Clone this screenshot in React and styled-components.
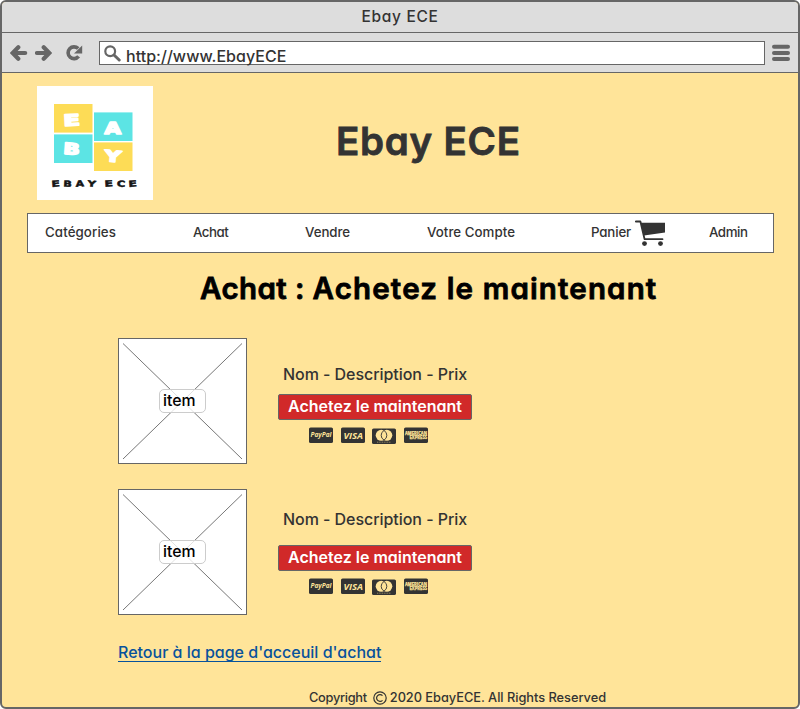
import React from 'react';
import styled, { createGlobalStyle } from 'styled-components';

const INK = '#333333';
const LINE = '#666666';

const GlobalStyle = createGlobalStyle`
  * { box-sizing: border-box; }
  body {
    margin: 0;
    background: #ffffff;
    color: ${INK};
    font-family: Inter, "Noto Sans", sans-serif;
    font-feature-settings: "cv11";
    font-weight: 500;
  }
`;

const Window = styled.div`
  display: flex;
  flex-direction: column;
  width: 800px;
  height: 709px;
  border: 2px solid ${LINE};
  border-radius: 6px;
  background: #ffe499;
  overflow: hidden;

  > * { flex: none; }
`;

const TitleBar = styled.div`
  height: 31px;
  border-bottom: 1px solid ${LINE};
  background: #dddddd;
  text-align: center;
  font-size: 15.5px;
  line-height: 29px;
  letter-spacing: 0.65px;
`;

const Toolbar = styled.div`
  display: flex;
  align-items: center;
  height: 40px;
  padding: 1px 7px 0 8px;
  border-bottom: 1px solid ${LINE};
  background: #dddddd;
`;

const ToolIcon = styled.svg`
  flex: none;
  width: ${({ $w }) => $w}px;
  height: 18px;
  margin-right: ${({ $gap = 0 }) => $gap}px;
  fill: none;
  stroke: ${LINE};
  stroke-width: 4;
`;

const AddressBar = styled.div`
  display: flex;
  width: 666px;
  height: 24px;
  margin-right: 7px;
  padding-left: 4px;
  border: 1px solid ${LINE};
  background: #ffffff;
`;

const SearchIcon = styled.svg`
  width: 17px;
  height: 17px;
  margin: 3px 5px 0 0;
  fill: none;
  stroke: ${LINE};
`;

const Address = styled.span`
  font-size: 16px;
  line-height: 29px;
  letter-spacing: 0.03px;
`;

const Header = styled.header`
  display: flex;
  align-items: center;
  padding: 13px 0 0 35px;
`;

const Logo = styled.svg`
  display: block;
  width: 116px;
  height: 114px;
  background: #ffffff;
  font-family: "DejaVu Sans", sans-serif;
  font-weight: 700;
`;

const SiteName = styled.h1`
  margin: 0 0 4px 183px;
  font-size: 38.5px;
  font-weight: 600;
  line-height: 48px;
  letter-spacing: 0.75px;
  -webkit-text-stroke: 0.8px ${INK};
`;

const Nav = styled.nav`
  display: grid;
  grid-template-columns: 148px 112px 122px 164px 118px auto;
  width: 747px;
  height: 40px;
  margin: 13px 0 0 25px;
  padding-left: 17px;
  border: 1px solid ${LINE};
  background: #ffffff;
`;

const NavItem = styled.span`
  display: flex;
  font-size: 13.3px;
  line-height: 37px;
  letter-spacing: ${({ $track }) => $track}px;
`;

const CartIcon = styled.svg`
  width: 31px;
  height: 27px;
  margin: 6px 0 0 4px;
  fill: ${INK};
  stroke: ${INK};
`;

const PageTitle = styled.h2`
  margin: 17px 0 0 198px;
  color: #000000;
  font-size: 29.5px;
  font-weight: 600;
  line-height: 36px;
  letter-spacing: 1.15px;
  -webkit-text-stroke: 0.8px #000000;
`;

const Prefix = styled.span`
  letter-spacing: 0.4px;
`;

const Items = styled.main`
  display: flex;
  flex-direction: column;
  gap: 25px;
  margin: 32px 0 0 116px;
`;

const ItemRow = styled.article`
  display: flex;
  gap: 31px;
  height: 126px;
`;

const Thumb = styled.div`
  display: grid;
  place-items: center;
  width: 129px;
  border: 1px solid ${LINE};
  background: #ffffff;
`;

const Cross = styled.svg`
  grid-area: 1 / 1;
  width: 127px;
  height: 124px;
  stroke: #777777;
`;

const ThumbLabel = styled.span`
  grid-area: 1 / 1;
  width: 47px;
  height: 24px;
  padding-left: 3px;
  border: 1px solid #cccccc;
  border-radius: 5px;
  background: rgba(255, 255, 255, 0.78);
  color: #000000;
  font-size: 15.8px;
  line-height: 22px;
`;

const Details = styled.div`
  display: flex;
  flex-direction: column;
  align-items: flex-start;
  justify-content: flex-end;
  padding-bottom: 20px;
`;

const Description = styled.p`
  margin: 0 0 ${({ $gap }) => $gap}px 5px;
  font-size: 16px;
  line-height: 20px;
  letter-spacing: -0.05px;
`;

const BuyButton = styled.button`
  width: 194px;
  height: 26px;
  padding: 0 0 2px;
  border: 1px solid ${LINE};
  border-radius: 2px;
  background: #d12929;
  color: #ffffff;
  font: inherit;
  font-feature-settings: "cv11";
  font-size: 16px;
  font-weight: 600;
  line-height: 22px;
  letter-spacing: 0;
  white-space: nowrap;
`;

const Cards = styled.div`
  display: flex;
  gap: 7.6px;
  margin: 7px 0 0 31px;
`;

const CardIcon = styled.svg`
  display: block;
  width: 24px;
  height: 17px;
  font-family: "Open Sans", sans-serif;
  font-style: italic;
  font-weight: 700;
`;

const BackLink = styled.a`
  align-self: flex-start;
  height: 20px;
  margin: 27px 0 0 116px;
  border-bottom: 1px solid #08529c;
  color: #08529c;
  font-size: 16px;
  line-height: 21px;
  text-decoration: none;
`;

const Footer = styled.footer`
  display: flex;
  align-items: center;
  gap: 6px;
  margin: 26px 0 0 307px;
  font-size: 12.8px;
  line-height: 20px;
  letter-spacing: -0.3px;
`;

const CopyrightIcon = styled.svg`
  width: 14px;
  height: 14px;
  margin-right: -3px;
  fill: none;
  stroke: ${INK};
  stroke-width: 1.2;
`;

const Rights = styled.span`
  letter-spacing: -0.02px;
`;

const NAV = [
  ['Catégories', 0.09],
  ['Achat', -0.5],
  ['Vendre', -0.07],
  ['Votre Compte', 0.04],
  ['Panier', -0.16],
  ['Admin', -0.45],
];

const ITEMS = [{ gap: 10 }, { gap: 16 }];

const TILES = [
  { letter: 'E', x: 17, y: 18, fill: '#fddc56', tx: 26.5, ty: 39.5, tilt: -3 },
  { letter: 'A', x: 57, y: 26.4, fill: '#5ce4e4', tx: 67.5, ty: 48.3, tilt: 0 },
  { letter: 'B', x: 17, y: 48.4, fill: '#5ce4e4', tx: 26.5, ty: 68.3, tilt: 4 },
  { letter: 'Y', x: 57, y: 56.4, fill: '#fddc56', tx: 67.8, ty: 75.8, tilt: 5 },
];

const CAPTION = [
  ['E', 14.5, -5], ['B', 26.5, 3], ['A', 38.5, -3], ['Y', 50.5, 6],
  ['E', 67.5, -4], ['C', 80, 3], ['E', 91.5, -5],
];

function EbayLogo() {
  return (
    <Logo viewBox="0 0 116 114">
      {TILES.map((t) => (
        <g key={t.letter}>
          <rect x={t.x} y={t.y} width="38.5" height="28.6" fill={t.fill} />
          <text x={t.tx} y={t.ty} fontSize="15.5" textLength="16.5" lengthAdjust="spacingAndGlyphs"
            transform={`rotate(${t.tilt} ${t.tx + 8} ${t.ty - 6})`}
            fill="#fff" stroke="#fff" strokeWidth="1.6" strokeLinejoin="round">{t.letter}</text>
        </g>
      ))}
      {CAPTION.map(([letter, x, tilt]) => (
        <text key={x} x={x} y="100.6" fontSize="8.4" textLength="8.4" lengthAdjust="spacingAndGlyphs"
          transform={`rotate(${tilt} ${x + 4} 97)`}
          fill="#151515" stroke="#151515" strokeWidth="0.5" strokeLinejoin="round">{letter}</text>
      ))}
    </Logo>
  );
}

const Plate = () => <rect x="0" y="0.5" width="24" height="15.5" rx="1.6" fill={INK} />;

function PaymentCards() {
  return (
    <Cards>
      <CardIcon viewBox="0 0 24 17">
        <Plate />
        <text x="1.5" y="10.2" fontSize="6.4" textLength="21" lengthAdjust="spacingAndGlyphs" fill="#ffe499">PayPal</text>
      </CardIcon>
      <CardIcon viewBox="0 0 24 17">
        <Plate />
        <text x="2.5" y="11.8" fontSize="9.6" textLength="19.5" lengthAdjust="spacingAndGlyphs" fill="#ffe499">VISA</text>
      </CardIcon>
      <CardIcon viewBox="0 -1 24 17">
        <Plate />
        <circle cx="9.2" cy="7.3" r="5.5" fill="#ffe499" />
        <circle cx="14.8" cy="7.3" r="5.5" fill="#ffe499" />
        <path d="M12 2.5a5.5 5.5 0 0 1 0 9.6a5.5 5.5 0 0 1 0-9.6z" fill="#ffe499" stroke={INK} strokeWidth="0.9" />
        <path d="M5 14.2h14" stroke="#ffe499" strokeWidth="0.9" strokeDasharray="1 0.7" opacity="0.55" />
      </CardIcon>
      <CardIcon viewBox="0 0 24 17">
        <Plate />
        <g fill="#ffe499" fontStyle="normal" stroke="#ffe499" strokeWidth="0.25">
          <text x="1" y="7.6" fontSize="4.6" textLength="22" lengthAdjust="spacingAndGlyphs">AMERICAN</text>
          <text x="5.5" y="12.4" fontSize="4.6" textLength="17.5" lengthAdjust="spacingAndGlyphs">EXPRESS</text>
        </g>
      </CardIcon>
    </Cards>
  );
}

export default function App() {
  return (
    <>
      <GlobalStyle />
      <Window>
        <TitleBar>Ebay ECE</TitleBar>
        <Toolbar>
          <ToolIcon $w={18} $gap={7} viewBox="0 0 18 18">
            <path d="M8.3 3.2L2.7 9l5.6 5.8M4 9h11.2" strokeLinecap="round" strokeWidth="4.2" />
          </ToolIcon>
          <ToolIcon $w={18} $gap={12} viewBox="0 0 18 18">
            <path d="M8.7 3.2L14.3 9l-5.6 5.8M13 9H2" strokeLinecap="round" strokeWidth="4.2" />
          </ToolIcon>
          <ToolIcon $w={18} $gap={16} viewBox="0 0 18 18">
            <path d="M13.2 4.6A5.9 5.9 0 1 0 13.6 12.4" strokeWidth="3.6" />
            <path d="M17.2 1.6v7.8H9z" fill={LINE} stroke="none" />
          </ToolIcon>
          <AddressBar>
            <SearchIcon viewBox="0 0 17 17">
              <circle cx="6.2" cy="6.2" r="4.9" strokeWidth="2.2" />
              <path d="M10 10l5.2 5" strokeWidth="3" strokeLinecap="round" />
            </SearchIcon>
            <Address>http://www.EbayECE</Address>
          </AddressBar>
          <ToolIcon $w={18} viewBox="0 0 18 18">
            <path d="M2 2.8h14M2 9h14M2 15h14" strokeLinecap="round" />
          </ToolIcon>
        </Toolbar>
        <Header>
          <EbayLogo />
          <SiteName>Ebay ECE</SiteName>
        </Header>
        <Nav>
          {NAV.map(([label, track]) => (
            <NavItem key={label} $track={track}>
              {label}
              {label === 'Panier' && (
                <CartIcon viewBox="0 0 31 27">
                  <path d="M5.5 2.7H30V12.5L9 15.5z" stroke="none" />
                  <path d="M0.8 1.5H5.4L9.6 19.2H27.5" fill="none" strokeWidth="1.8" strokeLinejoin="round" strokeLinecap="round" />
                  <circle cx="9.5" cy="23.6" r="2.4" stroke="none" />
                  <circle cx="25.5" cy="23.6" r="2.4" stroke="none" />
                </CartIcon>
              )}
            </NavItem>
          ))}
        </Nav>
        <PageTitle><Prefix>Achat : </Prefix>Achetez le maintenant</PageTitle>
        <Items>
          {ITEMS.map((item, i) => (
            <ItemRow key={i}>
              <Thumb>
                <Cross viewBox="0 0 127 124">
                  <path d="M4 4.5L123 120M123 4.5L4 120" />
                </Cross>
                <ThumbLabel>item</ThumbLabel>
              </Thumb>
              <Details>
                <Description $gap={item.gap}>Nom - Description - Prix</Description>
                <BuyButton>Achetez le maintenant</BuyButton>
                <PaymentCards />
              </Details>
            </ItemRow>
          ))}
        </Items>
        <BackLink href="#">Retour à la page d'acceuil d'achat</BackLink>
        <Footer>
          Copyright
          <CopyrightIcon viewBox="0 0 14 14">
            <circle cx="7" cy="7" r="6.2" />
            <path d="M9.5 4.7a3.4 3.4 0 1 0 0 4.6" />
          </CopyrightIcon>
          <Rights>2020 EbayECE. All Rights Reserved</Rights>
        </Footer>
      </Window>
    </>
  );
}
